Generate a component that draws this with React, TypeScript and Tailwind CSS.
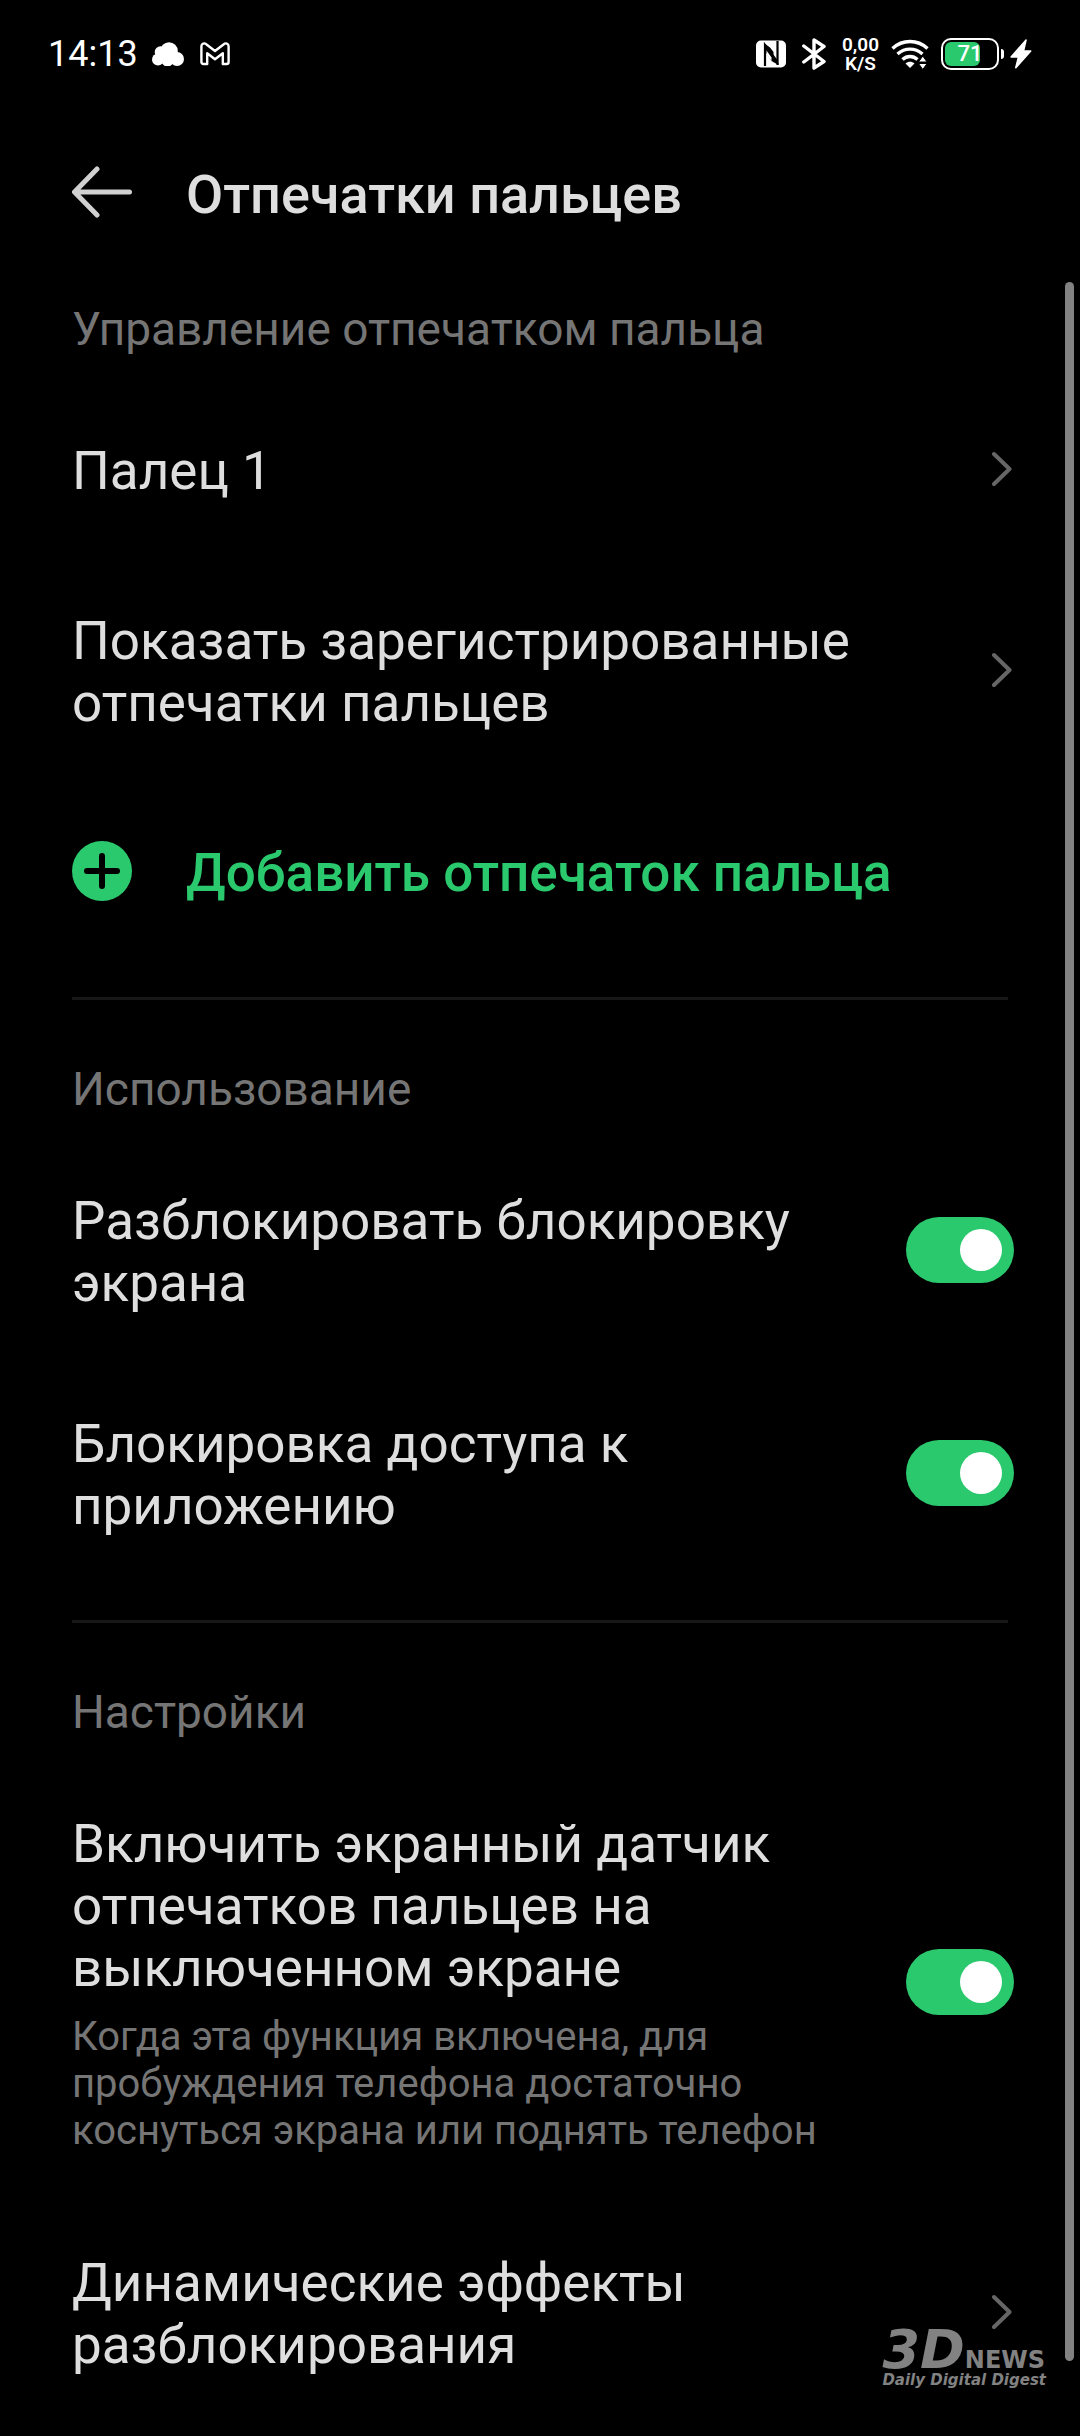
import { useState, type ReactNode } from 'react';
import clsx from 'clsx';

const CloudIcon = () => (
  <svg className="w-8 h-6" viewBox="0 0 32 24" fill="#fff">
    <circle cx="17" cy="9" r="8.8" />
    <circle cx="8.5" cy="10" r="5.8" />
    <circle cx="6" cy="17.5" r="6" />
    <circle cx="25" cy="17" r="7" />
    <circle cx="15.5" cy="18.5" r="6" />
  </svg>
);

const GmailIcon = () => (
  <svg className="w-[30px] h-6" viewBox="0 0 30 24" fill="none" stroke="#fff" strokeWidth="2.4" strokeLinejoin="round">
    <path d="M1.4 4.2C1.4 1.4 4.3.6 6.2 2.2L15 9l8.800-6.800c1.900-1.600 4.800-.8 4.800 2V20c0 1.200-.8 2-2 2h-3.800V11.200L15 17.200 7.200 11.200V22H3.400c-1.200 0-2-.8-2-2z" />
  </svg>
);

const NfcIcon = () => (
  <svg className="w-[30px] h-7" viewBox="0 0 30 28">
    <rect width="30" height="27" y="0.5" rx="5" fill="#fff" />
    <path d="M9 26V5l12.500 17" fill="none" stroke="#000" strokeWidth="2.200" />
    <path d="M8 3l6 4.500 3.500 4.500v6L22.500 23v2L15.500 21 10 13z" fill="#000" />
    <path d="M21.500 25V1" fill="none" stroke="#000" strokeWidth="2.200" />
    <path d="M10.500 10.500l5 7v3.500l-5-6.500z" fill="#fff" />
  </svg>
);

const BluetoothIcon = () => (
  <svg className="w-6 h-8" viewBox="0 0 24 32" fill="none" stroke="#fff" strokeWidth="3.400" strokeLinejoin="round" strokeLinecap="round">
    <path d="M1.800 8L22 23.500 12 30V2l10 6.500L1.800 24" />
  </svg>
);

const WifiIcon = () => (
  <svg className="w-[38px] h-8" viewBox="0 0 38 32" fill="none" stroke="#fff" strokeWidth="3.400">
    <path d="M1.500 10.500c10-9.300 25-9.300 35 0" />
    <path d="M6.500 16c7.500-6.500 17.500-6.500 25 0" />
    <path d="M11.500 21.500c4.500-4 10.500-4 15 0" />
    <path d="M14.500 25.500c2.600-2.300 6.400-2.300 9 0L19 30z" fill="#fff" stroke="none" />
    <path d="M27.500 24l4.300-6 4.300 6zM27.500 25.500l4.300 6 4.300-6z" fill="#fff" stroke="#000" strokeWidth="1" />
  </svg>
);

const BoltIcon = () => (
  <svg className="w-[22px] h-[30px]" viewBox="0 0 22 30" fill="#fff">
    <path d="M15.500.5L.5 17.500c-.4.600 0 1.200.6 1.200h6.400L5 28.500c-.2 1 .8 1.400 1.400.7L21.300 12.500c.5-.6.100-1.300-.6-1.300h-6.200L16.800 1.300C17 .4 16.100-.1 15.500.5z" />
  </svg>
);

const Battery = () => (
  <div className="flex items-center">
    <div className="w-[58px] h-8 rounded-[10px] border-2 border-white p-0.5">
      <div className="relative h-full w-full">
        <div className="h-full w-[35px] rounded-[6px] bg-[#2bc96d]" />
        <span className="absolute inset-0 flex items-center justify-center text-[22px] leading-none font-medium">71</span>
      </div>
    </div>
    <div className="ml-0.5 w-[3px] h-2.5 rounded-r-full bg-white" />
  </div>
);

const StatusBar = () => (
  <div className="flex items-center justify-between h-[108px] px-12 text-white">
    <div className="flex items-center">
      <span className="text-[36px] leading-[42px]">14:13</span>
      <div className="ml-3.5 flex items-center gap-4">
        <CloudIcon />
        <GmailIcon />
      </div>
    </div>
    <div className="flex items-center gap-3">
      <div className="flex items-center gap-4">
        <NfcIcon />
        <BluetoothIcon />
        <div className="flex flex-col items-center text-[19px] leading-[19px] font-semibold">
          <span>0,00</span>
          <span>K/S</span>
        </div>
      </div>
      <WifiIcon />
      <div className="flex items-center gap-1.5">
        <Battery />
        <BoltIcon />
      </div>
    </div>
  </div>
);

const Chevron = () => (
  <svg className="mr-0.5 w-5 h-9 shrink-0" viewBox="0 0 20 36" fill="none" stroke="#666" strokeWidth="4" strokeLinecap="round" strokeLinejoin="round">
    <path d="M2 3l15.500 15L2 33" />
  </svg>
);

const SectionTitle = ({ children }: { children: ReactNode }) => (
  <h2 className="text-[46px] leading-[54px] text-[#757575]">{children}</h2>
);

const Divider = () => <hr className="mr-1.5 border-0 h-[3px] bg-[#171717]" />;

const LinkRow = ({ label, compact = false }: { label: string; compact?: boolean }) => (
  <a href="#" className={clsx('flex items-center justify-between gap-12', compact ? 'py-[47px]' : 'py-[52px]')}>
    <span className="pt-1 text-[53px] leading-[62px]">{label}</span>
    <Chevron />
  </a>
);

type SwitchRowProps = { id: string; label: string; description?: string };

const SwitchRow = ({ id, label, description }: SwitchRowProps) => {
  const [on, setOn] = useState(true);

  return (
    <div className="flex items-center justify-between gap-12 pt-12 pb-[47px]">
      <label htmlFor={id} className="min-w-0 pt-1">
        <span className="block text-[53px] leading-[62px]">{label}</span>
        {description && (
          <span className="mt-3.5 block text-[40px] leading-[47px] text-[#757575]">{description}</span>
        )}
      </label>
      <input
        id={id}
        type="checkbox"
        role="switch"
        checked={on}
        onChange={(e) => setOn(e.target.checked)}
        className="flex h-[66px] w-[108px] shrink-0 appearance-none items-center rounded-full bg-[#3a3a3a] px-3 transition-colors before:h-[42px] before:w-[42px] before:rounded-full before:bg-white before:transition-transform checked:bg-[#2bc96d] checked:before:translate-x-[42px]"
      />
    </div>
  );
};

const Watermark = () => (
  <div className="absolute right-[34px] bottom-12 text-[#828282] font-['DejaVu_Sans',sans-serif] font-bold">
    <div className="flex items-baseline">
      <span className="text-[54px] leading-[40px] italic">3D</span>
      <span className="text-[24px] leading-[24px]">NEWS</span>
    </div>
    <div className="text-[15px] leading-[16px] italic">Daily Digital Digest</div>
  </div>
);

export default function App() {
  return (
    <div className="relative flex min-h-screen flex-col bg-black text-[#dedede] font-[Roboto,sans-serif]">
      <StatusBar />
      <header className="flex h-[174px] items-start gap-[54px] px-[72px] pt-[54px]">
        <button type="button" aria-label="Назад" className="h-[60px] w-[60px]">
          <svg className="h-[60px] w-[60px]" viewBox="0 0 60 60" fill="none" stroke="#d0d0d0" strokeWidth="5" strokeLinecap="round" strokeLinejoin="round">
            <path d="M57.500 30H3M25 7L2.500 30 25 53" />
          </svg>
        </button>
        <h1 className="pt-0.5 text-[54px] leading-[62px] font-medium">Отпечатки пальцев</h1>
      </header>

      <main className="relative flex-1 pl-[72px] pr-[66px] pt-5">
        <section>
          <SectionTitle>Управление отпечатком пальца</SectionTitle>
          <div className="pt-7 pb-[41px]">
            <LinkRow label="Палец 1" />
            <LinkRow label="Показать зарегистрированные отпечатки пальцев" />
            <button type="button" className="flex w-full items-center gap-[54px] py-[52px] text-left text-[#2bc96d]">
              <svg className="h-[60px] w-[60px]" viewBox="0 0 60 60">
                <circle cx="30" cy="30" r="30" fill="#2bc96d" />
                <path d="M15 30h30M30 15v30" stroke="#000" strokeWidth="6" strokeLinecap="round" />
              </svg>
              <span className="pt-1 text-[53px] leading-[62px] font-medium">Добавить отпечаток пальца</span>
            </button>
          </div>
        </section>
        <Divider />
        <section className="pt-[62px]">
          <SectionTitle>Использование</SectionTitle>
          <div className="pt-[22px] pb-9">
            <SwitchRow id="unlock-screen" label="Разблокировать блокировку экрана" />
            <SwitchRow id="app-lock" label="Блокировка доступа к приложению" />
          </div>
        </section>
        <Divider />
        <section className="pt-[62px]">
          <SectionTitle>Настройки</SectionTitle>
          <div className="pt-[22px]">
            <SwitchRow
              id="screen-off"
              label="Включить экранный датчик отпечатков пальцев на выключенном экране"
              description="Когда эта функция включена, для пробуждения телефона достаточно коснуться экрана или поднять телефон"
            />
            <LinkRow compact label="Динамические эффекты разблокирования" />
          </div>
        </section>
        {/* scroll thumb */}
        <div className="absolute top-0 right-1.5 bottom-[75px] w-[9px] rounded-full bg-[#828282]" />
      </main>
      <Watermark />
    </div>
  );
}
